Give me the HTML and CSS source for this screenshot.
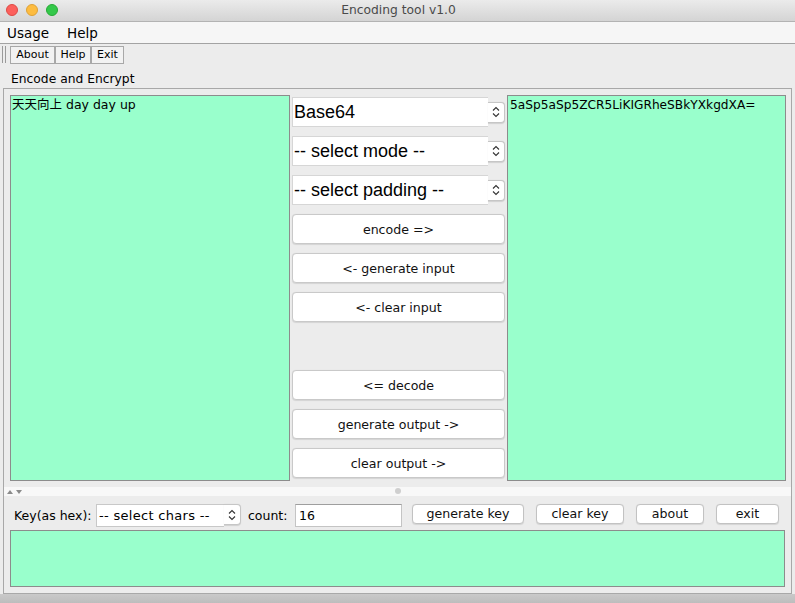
FILE: index.html
```html
<!DOCTYPE html>
<html>
<head>
<meta charset="utf-8">
<title>Encoding tool v1.0</title>
<link rel="stylesheet" href="styles.css">
</head>
<body>
<div class="window">
  <div class="titlebar">
    <div class="lights">
      <span class="light red"></span>
      <span class="light yellow"></span>
      <span class="light green"></span>
    </div>
    <div class="title">Encoding tool v1.0</div>
  </div>
  <div class="menubar">
    <span class="menu-item">Usage</span>
    <span class="menu-item">Help</span>
  </div>
  <div class="toolbar">
    <span class="grip"></span>
    <button class="tb-btn tb-about">About</button>
    <button class="tb-btn tb-help">Help</button>
    <button class="tb-btn tb-exit">Exit</button>
  </div>
  <div class="section-label">Encode and Encrypt</div>
  <div class="panel">
    <div class="top">
      <div class="textarea input-area">天天向上 day day up</div>
      <div class="middle">
        <div class="combo big">
          <div class="combo-field">Base64</div>
          <div class="combo-arrow"><svg width="8" height="14" viewBox="0 0 8 14"><path d="M1 5.5 L4 2.5 L7 5.5 M1 8.5 L4 11.5 L7 8.5" fill="none" stroke="#333" stroke-width="1.1"/></svg></div>
        </div>
        <div class="combo big">
          <div class="combo-field">-- select mode --</div>
          <div class="combo-arrow"><svg width="8" height="14" viewBox="0 0 8 14"><path d="M1 5.5 L4 2.5 L7 5.5 M1 8.5 L4 11.5 L7 8.5" fill="none" stroke="#333" stroke-width="1.1"/></svg></div>
        </div>
        <div class="combo big">
          <div class="combo-field">-- select padding --</div>
          <div class="combo-arrow"><svg width="8" height="14" viewBox="0 0 8 14"><path d="M1 5.5 L4 2.5 L7 5.5 M1 8.5 L4 11.5 L7 8.5" fill="none" stroke="#333" stroke-width="1.1"/></svg></div>
        </div>
        <button class="btn">encode =&gt;</button>
        <button class="btn">&lt;- generate input</button>
        <button class="btn">&lt;- clear input</button>
        <div class="spacer"></div>
        <button class="btn">&lt;= decode</button>
        <button class="btn">generate output -&gt;</button>
        <button class="btn">clear output -&gt;</button>
      </div>
      <div class="textarea output-area">5aSp5aSp5ZCR5LiKIGRheSBkYXkgdXA=</div>
    </div>
    <div class="divider">
      <svg class="div-arrows" width="18" height="6" viewBox="0 0 18 6"><path d="M0 5 L3 1 L6 5 Z M9 1 L15 1 L12 5 Z" fill="#8a8a8a"/></svg>
      <span class="div-dot"></span>
    </div>
    <div class="keyrow">
      <span class="key-label">Key(as hex):</span>
      <div class="combo small">
        <div class="combo-field">-- select chars --</div>
        <div class="combo-arrow"><svg width="8" height="14" viewBox="0 0 8 14"><path d="M1 5.5 L4 2.5 L7 5.5 M1 8.5 L4 11.5 L7 8.5" fill="none" stroke="#333" stroke-width="1.1"/></svg></div>
      </div>
      <span class="count-label">count:</span>
      <div class="count-field">16</div>
      <button class="kbtn k-gen">generate key</button>
      <button class="kbtn k-clear">clear key</button>
      <button class="kbtn k-about">about</button>
      <button class="kbtn k-exit">exit</button>
    </div>
    <div class="textarea key-area"></div>
  </div>
  <div class="footer"></div>
</div>
</body>
</html>
```
FILE: styles.css
```css
* { box-sizing: border-box; }
html, body { margin: 0; padding: 0; }
body {
  width: 795px;
  height: 603px;
  overflow: hidden;
  background: #ececec;
  font-family: "DejaVu Sans", "Noto Sans CJK SC", sans-serif;
  color: #000;
}
.window {
  display: flex;
  flex-direction: column;
  width: 795px;
  height: 603px;
}
.titlebar {
  position: relative;
  height: 22px;
  flex: none;
  background: linear-gradient(#ebebeb, #d4d4d4);
  border-bottom: 1px solid #b3b3b3;
  display: flex;
  align-items: center;
  justify-content: center;
}
.lights {
  position: absolute;
  left: 6px;
  top: 4px;
  display: flex;
  gap: 8px;
}
.light {
  width: 12px;
  height: 12px;
  border-radius: 50%;
  display: block;
}
.red { background: #fc605c; border: 0.5px solid #de4a45; }
.yellow { background: #fdbc40; border: 0.5px solid #dea236; }
.green { background: #34c84a; border: 0.5px solid #27aa35; }
.title {
  font-size: 12.3px;
  color: #4a4a4a;
  line-height: 21px;
  margin-left: 2px;
}
.menubar {
  height: 22px;
  flex: none;
  background: #f6f6f6;
  border-bottom: 1px solid #a3a3a3;
  display: flex;
  align-items: center;
  padding-left: 7px;
  font-size: 13.5px;
  gap: 18px;
}
.toolbar {
  height: 23px;
  flex: none;
  display: flex;
  align-items: flex-start;
  padding-top: 2px;
  padding-left: 2px;
}
.grip {
  width: 4px;
  height: 17px;
  border-left: 1px solid #9a9a9a;
  border-right: 1px solid #9a9a9a;
  margin-right: 4px;
}
.tb-btn {
  height: 18px;
  border: 1px solid #a8a8a8;
  background: #f2f2f2;
  font-family: "DejaVu Sans", sans-serif;
  font-size: 11px;
  padding: 0;
  margin: 0;
  color: #000;
  line-height: 16px;
}
.tb-about { width: 45px; }
.tb-help { width: 36px; }
.tb-exit { width: 33px; }
.section-label {
  height: 21px;
  flex: none;
  padding: 4px 0 0 11px;
  font-size: 12.3px;
  line-height: 16px;
}
.panel {
  flex: none;
  height: 506px;
  margin: 0 3px 0 3px;
  border: 1px solid #a8a8a8;
  display: flex;
  flex-direction: column;
  padding-bottom: 6px;
}
.top {
  display: grid;
  grid-template-columns: 280px 217px 279px;
  height: 392px;
  padding: 6px 6px 0 6px;
  flex: none;
}
.textarea {
  background: #99ffcc;
  border: 1px solid #8c8c8c;
  padding: 1px 1px;
  font-size: 12.5px;
  line-height: 16px;
}
.output-area { padding-left: 2px; font-size: 12.2px; }
.middle {
  display: grid;
  grid-template-rows: repeat(10, 30px);
  row-gap: 9px;
  padding: 2px 2px 0 2px;
}
.combo {
  display: flex;
  align-items: center;
}
.combo-field {
  flex: 1;
  height: 100%;
  background: #fff;
  border: 1px solid #d6d6d6;
  border-right: none;
  white-space: nowrap;
  overflow: hidden;
  display: flex;
  align-items: center;
}
.combo-arrow {
  width: 17px;
  background: #fff;
  border: 1px solid #c6c6c6;
  border-left: none;
  border-radius: 0 4px 4px 0;
  display: flex;
  align-items: center;
  justify-content: center;
  box-shadow: 0 0.5px 1px rgba(0,0,0,0.12);
}
.combo.big .combo-field {
  font-family: "Liberation Sans", Arial, sans-serif;
  font-size: 18px;
  padding-left: 1px;
}
.combo.big .combo-arrow { height: 21px; }
.btn {
  height: 30px;
  margin: 0;
  padding: 0;
  background: #fff;
  border: 1px solid #c9c9c9;
  border-radius: 4px;
  font-family: "DejaVu Sans", sans-serif;
  font-size: 12.6px;
  color: #111;
  box-shadow: 0 0.5px 1px rgba(0,0,0,0.1);
}
.divider {
  position: relative;
  height: 9px;
  margin-top: 6px;
  background: #f8f8f8;
  flex: none;
}
.div-arrows {
  position: absolute;
  left: 3px;
  top: 2px;
}
.div-dot {
  position: absolute;
  left: 391px;
  top: 1px;
  width: 6px;
  height: 6px;
  border-radius: 50%;
  background: #cfcfcf;
}
.keyrow {
  display: flex;
  align-items: flex-start;
  height: 23px;
  margin-top: 8px;
  padding-left: 10px;
  font-size: 12.5px;
  flex: none;
  white-space: nowrap;
}
.key-label { line-height: 23px; width: 74px; }
.combo.small {
  margin-left: 8px;
  width: 145px;
  height: 23px;
  align-items: flex-start;
}
.combo.small .combo-field {
  font-size: 13px;
  letter-spacing: 0.3px;
  padding-left: 2px;
  border-color: #c8c8c8;
}
.combo.small .combo-arrow { height: 21px; }
.count-label { margin-left: 7px; width: 40px; line-height: 23px; }
.count-field {
  margin-left: 7px;
  width: 107px;
  height: 23px;
  background: #fff;
  border: 1px solid #c4c4c4;
  border-top-color: #9e9e9e;
  padding-left: 3px;
  line-height: 21px;
}
.kbtn {
  height: 20px;
  margin: 0;
  padding: 0;
  background: #fff;
  border: 1px solid #c2c2c2;
  border-radius: 4px;
  font-family: "DejaVu Sans", sans-serif;
  font-size: 12.6px;
  color: #111;
  line-height: 18px;
  box-shadow: 0 0.5px 1px rgba(0,0,0,0.1);
}
.k-gen { margin-left: 10px; width: 112px; }
.k-clear { margin-left: 12px; width: 88px; }
.k-about { margin-left: 12px; width: 68px; }
.k-exit { margin-left: 12px; width: 63px; }
.key-area {
  margin: 3px 6px 0 6px;
  height: 57px;
  flex: none;
}
.footer {
  flex: 1;
  background: linear-gradient(#c9c9c9, #bdbdbd);
}
```
